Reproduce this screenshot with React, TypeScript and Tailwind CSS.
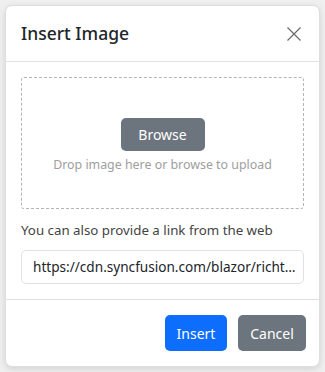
import React from "react";

export default function App() {
  return (
    <div
      className="w-[325px] h-[372px] bg-[#efefef] p-[5px]"
      style={{ fontFamily: '"Noto Sans", "Open Sans", sans-serif' }}
    >
      <div className="w-[315px] h-[362px] bg-white rounded-[7px] border border-[#dedede] shadow-[0_2px_6px_rgba(0,0,0,0.12)] flex flex-col">
        <div className="h-[56px] shrink-0 flex items-center justify-between pl-[15px] pr-[17px] border-b border-[#dee2e6]">
          <span className="text-[17.5px] font-medium text-[#212529] leading-none">Insert Image</span>
          <svg width="16" height="16" viewBox="0 0 16 16" className="text-[#6b6b6b]">
            <path d="M1.5 1.5L14.5 14.5M14.5 1.5L1.5 14.5" stroke="currentColor" strokeWidth="1.2" fill="none" />
          </svg>
        </div>
        <div className="flex-1 px-[15px] pt-[15px] flex flex-col">
          <div className="h-[132px] border border-dashed border-[#b5b5b5] rounded-[3px] flex flex-col items-center pt-[40px]">
            <div className="h-[33px] w-[84px] rounded-[5px] bg-[#6c757d] text-white text-[14px] flex items-center justify-center">
              Browse
            </div>
            <div className="mt-[4px] text-[12.4px] text-[#9e9e9e] leading-[20px]">
              Drop image here or browse to upload
            </div>
          </div>
          <div className="mt-[11px] text-[13.3px] text-[#444] leading-[20px]">
            You can also provide a link from the web
          </div>
          <div className="mt-[10px] h-[34px] border border-[#dee2e6] rounded-[5px] flex items-center pl-[11px] pr-[6px] text-[13.6px] text-[#212529] overflow-hidden whitespace-nowrap">
            <span className="truncate">https://cdn.syncfusion.com/blazor/richtext-editor/images/RTEImage-Feather.png</span>
          </div>
        </div>
        <div className="h-[67px] shrink-0 border-t border-[#dee2e6] flex items-center justify-end gap-[11px] pr-[13px]">
          <div className="h-[36px] w-[62px] rounded-[5px] bg-[#0d6efd] text-white text-[14px] flex items-center justify-center">
            Insert
          </div>
          <div className="h-[36px] w-[68px] rounded-[5px] bg-[#6c757d] text-white text-[14px] flex items-center justify-center">
            Cancel
          </div>
        </div>
      </div>
    </div>
  );
}
